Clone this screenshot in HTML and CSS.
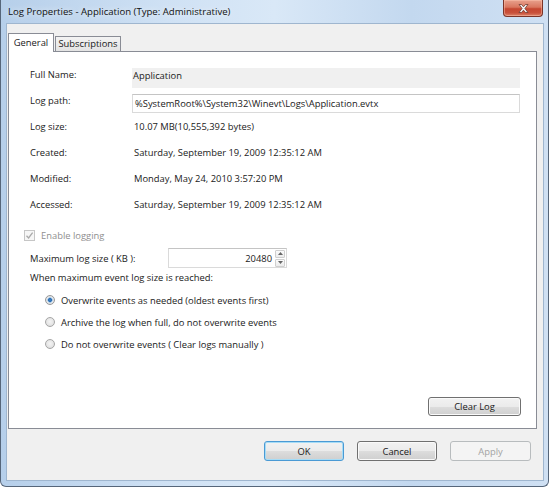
FILE: index.html
```html
<!DOCTYPE html>
<html>
<head>
<meta charset="utf-8">
<link rel="stylesheet" href="styles.css">
</head>
<body>
<div class="window">
  <div class="titlebar">
    <span class="title">Log Properties - Application (Type: Administrative)</span>
    <div class="close">
      <svg width="11" height="9" viewBox="0 0 11 9"><path d="M1 0.5 L3.5 0.5 L5.5 2.8 L7.5 0.5 L10 0.5 L6.9 4.5 L10 8.5 L7.5 8.5 L5.5 6.2 L3.5 8.5 L1 8.5 L4.1 4.5 Z" fill="#f4f4f4" stroke="#6e3a30" stroke-width="0.8" stroke-linejoin="round"/></svg>
    </div>
  </div>
  <div class="client">
    <div class="tabs">
      <div class="tab active">General</div>
      <div class="tab">Subscriptions</div>
    </div>
    <div class="panel">
      <div class="info">
        <span class="lbl">Full Name:</span>
        <span class="ro-box">Application</span>
        <span class="lbl">Log path:</span>
        <span class="textbox">%SystemRoot%\System32\Winevt\Logs\Application.evtx</span>
        <span class="lbl">Log size:</span>
        <span class="val">10.07 MB(10,555,392 bytes)</span>
        <span class="lbl">Created:</span>
        <span class="val">Saturday, September 19, 2009 12:35:12 AM</span>
        <span class="lbl">Modified:</span>
        <span class="val">Monday, May 24, 2010 3:57:20 PM</span>
        <span class="lbl">Accessed:</span>
        <span class="val">Saturday, September 19, 2009 12:35:12 AM</span>
      </div>
      <div class="check-row">
        <span class="checkbox">
          <svg width="9" height="9" viewBox="0 0 9 9"><path d="M1.5 4.8 L3.6 7 L7.6 1.6" fill="none" stroke="#a9a9a9" stroke-width="1.3"/></svg>
        </span>
        <span class="disabled-text">Enable logging</span>
      </div>
      <div class="size-row">
        <span class="size-lbl">Maximum log size ( KB ):</span>
        <div class="spin">
          <span class="spin-val">20480</span>
          <div class="spin-btns">
            <span class="spin-btn"><svg width="5" height="3" viewBox="0 0 5 3"><path d="M0 3 L2.5 0 L5 3 Z" fill="#666"/></svg></span>
            <span class="spin-btn"><svg width="5" height="3" viewBox="0 0 5 3"><path d="M0 0 L2.5 3 L5 0 Z" fill="#666"/></svg></span>
          </div>
        </div>
      </div>
      <div class="when">When maximum event log size is reached:</div>
      <div class="radios">
        <div class="radio-row"><span class="radio on"></span><span>Overwrite events as needed (oldest events first)</span></div>
        <div class="radio-row"><span class="radio"></span><span>Archive the log when full, do not overwrite events</span></div>
        <div class="radio-row"><span class="radio"></span><span>Do not overwrite events ( Clear logs manually )</span></div>
      </div>
      <div class="clear-row">
        <button class="btn clear">Clear Log</button>
      </div>
    </div>
    <div class="buttons">
      <button class="btn default">OK</button>
      <button class="btn">Cancel</button>
      <button class="btn disabled">Apply</button>
    </div>
  </div>
</div>
</body>
</html>
```

FILE: styles.css
```css
* { box-sizing: border-box; }
html, body { margin: 0; padding: 0; }
body {
  width: 549px;
  height: 487px;
  overflow: hidden;
  font-family: "Open Sans", "Noto Sans", sans-serif;
  font-size: 9.4px;
  color: #1a1a1a;
  background: #fff;
}
.window {
  width: 549px;
  height: 487px;
  border: 1px solid #56667a;
  border-top: none;
  border-radius: 0 0 6px 6px;
  padding: 0 5px 6px 6px;
  background: linear-gradient(to right, #b6cfea 0%, #cfe1f4 30%, #d9e8f7 50%, #c3d8ef 75%, #cfe0f3 100%);
  display: flex;
  flex-direction: column;
}
.titlebar {
  height: 24px;
  display: flex;
  align-items: flex-start;
  justify-content: space-between;
  padding-left: 1px;
}
.title {
  line-height: 24px;
  font-size: 9.6px;
  color: #111;
  text-shadow: 0 0 6px rgba(255,255,255,0.9);
}
.close {
  width: 40px;
  height: 17px;
  border: 1px solid #7b3428;
  border-top: none;
  border-radius: 0 0 4px 4px;
  background: linear-gradient(#e8a18d 0%, #d9765f 45%, #c54630 55%, #c9503a 80%, #dc8268 100%);
  box-shadow: inset 0 0 0 1px rgba(255,200,180,0.45);
  display: flex;
  align-items: center;
  justify-content: center;
}
.client {
  flex: 1;
  background: #f0f0f0;
  padding: 9px 6px 0 1px;
  box-shadow: 0 0 0 1px #9fb6cf;
}
.tabs {
  display: flex;
  align-items: flex-end;
  margin-bottom: -1px;
  height: 19px;
}
.tab {
  height: 15px;
  margin-bottom: 1px;
  border: 1px solid #898c95;
  border-bottom: none;
  background: linear-gradient(#f3f3f3, #e3e3e3);
  padding: 0;
  width: 66px;
  line-height: 14px;
  text-align: center;
  margin-left: 1px;
}
.tab.active {
  height: 19px;
  margin-bottom: 0;
  margin-left: 0;
  width: 46px;
  background: #fff;
  position: relative;
  z-index: 1;
  line-height: 17px;
}
.panel {
  background: #fff;
  border: 1px solid #898c95;
  padding: 10px 0 12px 0;
}
.info {
  display: grid;
  grid-template-columns: 102px 1fr;
  grid-auto-rows: 26px;
  align-items: center;
  margin: 0 16px 0 21px;
  line-height: 14px;
}
.ro-box {
  align-self: end;
  height: 20px;
  background: #f0f0f0;
  padding: 1px 1px 0;
  line-height: 13px;
}
.textbox {
  align-self: end;
  height: 19px;
  margin-bottom: 1px;
  border: 1px solid #dadada;
  border-top-color: #c4c4c4;
  padding: 0 2px;
  line-height: 17px;
}
.val { padding-left: 2px; }
.check-row {
  margin: 10px 0 0 15px;
  height: 14px;
  display: flex;
  align-items: center;
  gap: 6px;
}
.checkbox {
  width: 11px;
  height: 11px;
  border: 1px solid #c6c6c6;
  background: #f6f6f6;
  display: flex;
  align-items: center;
  justify-content: center;
}
.disabled-text { color: #8f8f8f; }
.size-row {
  margin: 6px 0 0 21px;
  display: flex;
  align-items: center;
  height: 20px;
}
.size-lbl { width: 138px; }
.spin {
  width: 119px;
  height: 20px;
  border: 1px solid #dadada;
  border-top-color: #c4c4c4;
  display: flex;
  align-items: center;
  justify-content: flex-end;
  padding-right: 1px;
}
.spin-val { margin-right: 3px; }
.spin-btns {
  display: flex;
  flex-direction: column;
  gap: 1px;
}
.spin-btn {
  width: 10px;
  height: 8px;
  border: 1px solid #cfcfcf;
  border-radius: 1px;
  background: linear-gradient(#fbfbfb, #ececec);
  display: flex;
  align-items: center;
  justify-content: center;
}
.when {
  margin: 3px 0 0 21px;
  line-height: 14px;
}
.radios {
  margin: 4px 0 0 36px;
}
.radio-row {
  height: 22px;
  display: flex;
  align-items: center;
  gap: 6px;
}
.radio {
  width: 10px;
  height: 10px;
  border-radius: 50%;
  border: 1px solid #a6a6a6;
  background: radial-gradient(circle at 50% 45%, #f4f4f4 0%, #e6e6e6 55%, #d2d2d2 100%);
  display: inline-block;
}
.radio.on {
  border-color: #9a9a9a;
  background: radial-gradient(circle at 50% 50%, #3f8fd8 0%, #2563a8 26%, #7fb2e0 38%, #e4e8ec 52%, #d4d4d4 100%);
}
.clear-row {
  margin: 42px 15px 0 0;
  display: flex;
  justify-content: flex-end;
}
.btn {
  font-family: inherit;
  font-size: inherit;
  color: #1a1a1a;
  width: 80px;
  height: 20px;
  padding: 0;
  border: 1px solid #707070;
  border-radius: 3px;
  background: linear-gradient(#f2f2f2 0%, #ebebeb 50%, #dddddd 51%, #cfcfcf 100%);
  box-shadow: inset 0 0 0 1px #fafafa;
}
.btn.clear { width: 93px; height: 19px; }
.btn.default {
  border-color: #4a9ad4;
  box-shadow: inset 0 0 0 1px #a6dcf6;
}
.btn.disabled {
  width: 81px;
  color: #a3a3a3;
  border-color: #b8bcbe;
  background: #f4f4f4;
  box-shadow: none;
}
.buttons {
  margin: 12px 6px 0 0;
  display: flex;
  justify-content: flex-end;
  gap: 13px;
}
```
